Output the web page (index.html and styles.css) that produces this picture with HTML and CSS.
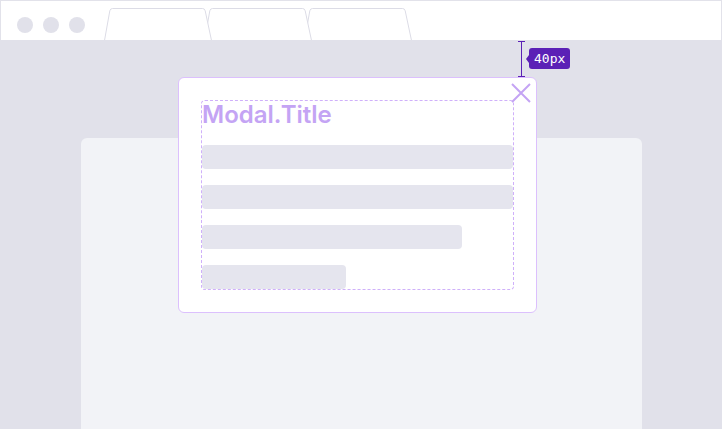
FILE: index.html
```html
<!DOCTYPE html>
<html lang="en">
<head>
<meta charset="utf-8">
<title>Modal</title>
<link rel="stylesheet" href="styles.css">
</head>
<body>
<div class="window">
  <div class="titlebar">
    <div class="dots"><span class="dot"></span><span class="dot"></span><span class="dot"></span></div>
    <svg class="tabs" width="310" height="32" viewBox="0 0 310 32">
      <g fill="#fff" stroke="#dcdce6" stroke-width="1">
        <path transform="translate(200 0)" d="M1.5 32.5 L6.8 2.8 Q7.3 0.5 9.6 0.5 L99.4 0.5 Q101.7 0.5 102.2 2.8 L108.5 32.5"/>
        <path transform="translate(100 0)" d="M1.5 32.5 L6.8 2.8 Q7.3 0.5 9.6 0.5 L99.4 0.5 Q101.7 0.5 102.2 2.8 L108.5 32.5"/>
        <path d="M1.5 32.5 L6.8 2.8 Q7.3 0.5 9.6 0.5 L99.4 0.5 Q101.7 0.5 102.2 2.8 L108.5 32.5"/>
      </g>
    </svg>
  </div>
  <div class="viewport">
    <div class="page"></div>
    <div class="modal">
      <div class="modal-body">
        <div class="modal-title">Modal.Title</div>
        <div class="bar"></div>
        <div class="bar"></div>
        <div class="bar bar-mid"></div>
        <div class="bar bar-short"></div>
      </div>
      <svg class="close" width="24" height="24" viewBox="0 0 24 24">
        <path d="M3 3 L21 21 M21 3 L3 21" stroke="#c4a4f4" stroke-width="2" fill="none"/>
      </svg>
    </div>
    <svg class="measure" width="8" height="36" viewBox="0 0 8 36">
      <path d="M0 0.5 H7 M3.5 0 V36 M0 35.5 H7" stroke="#5b21b6" stroke-width="1" fill="none"/>
    </svg>
    <div class="pill">40px</div>
  </div>
</div>
</body>
</html>
```
FILE: styles.css
```css
* { box-sizing: border-box; }
html, body { margin: 0; padding: 0; }
body { width: 722px; height: 429px; overflow: hidden; background: #e1e1ea; font-family: Inter, "Noto Sans", sans-serif; }

.window { width: 722px; height: 429px; }

.titlebar {
  height: 40px;
  background: #fff;
  border: 1px solid #e2e2ea;
  border-bottom: none;
  display: flex;
  align-items: flex-start;
}
.dots { display: flex; gap: 10px; margin: 16px 0 0 16px; }
.dot { width: 16px; height: 16px; border-radius: 50%; background: #e1e1ea; }
.tabs { display: block; margin: 7px 0 0 18px; }

.viewport {
  position: relative;
  height: 389px;
  background: #e1e1ea;
  overflow: hidden;
}
.page {
  margin: 98px 0 0 81px;
  width: 561px;
  height: 320px;
  background: #f2f3f7;
  border-radius: 6px;
}

.modal {
  position: absolute;
  left: 178px;
  top: 37px;
  width: 359px;
  height: 236px;
  background: #fff;
  border: 1px solid #dcc0fd;
  border-radius: 6px;
  padding: 22px;
}
.modal-body {
  height: 100%;
  border: 1px dashed #cfb0fa;
  border-radius: 4px;
  display: flex;
  flex-direction: column;
  gap: 16px;
}
.modal-title {
  font-family: Inter, sans-serif;
  font-weight: 600;
  font-size: 24px;
  line-height: 28px;
  height: 28px;
  color: #c4a4f4;
}
.bar { height: 24px; flex: none; background: #e5e5ee; border-radius: 4px; }
.bar-mid { width: 260px; }
.bar-short { width: 144px; }

.close { position: absolute; top: 3px; right: 3px; display: block; }

.measure { position: absolute; left: 518px; top: 1px; display: block; }
.pill {
  position: absolute;
  left: 529px;
  top: 8px;
  height: 21px;
  padding: 0 5px;
  background: #5b21b6;
  color: #fff;
  border-radius: 3px;
  font-family: "DejaVu Sans Mono", monospace;
  font-size: 13px;
  line-height: 21px;
}
.pill::before {
  content: "";
  position: absolute;
  left: -3px;
  top: 7px;
  border-top: 4px solid transparent;
  border-bottom: 4px solid transparent;
  border-right: 3px solid #5b21b6;
}
```
